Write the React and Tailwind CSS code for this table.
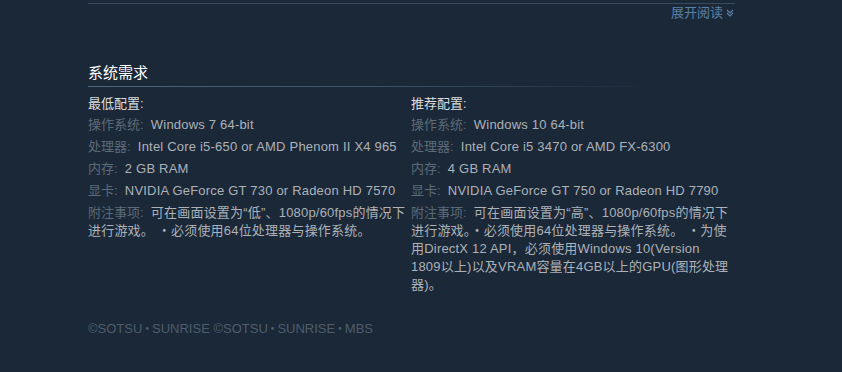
import React from "react";

const font = { fontFamily: '"Liberation Sans", "Noto Sans CJK SC", sans-serif' };

function Row({ label, children }) {
  return (
    <li className="mb-[4px] leading-[18px]">
      <span className="text-[#5c6a77]">{label}</span>
      <span className="text-[#acb2b8] tracking-[0.2px]">{children}</span>
    </li>
  );
}

function Col({ title, rows }) {
  return (
    <div className="w-[322px]">
      <div className="text-[#dcdedf] leading-[18px] mb-[3px]">{title}</div>
      <ul>
        {rows.map((r, i) => (
          <Row key={i} label={r[0]}>{r[1]}</Row>
        ))}
      </ul>
    </div>
  );
}

function Dot() {
  return <span className="mx-[-1.7px]">・</span>;
}

export default function App() {
  const left = [
    ["操作系统:  ", "Windows 7 64-bit"],
    ["处理器:  ", "Intel Core i5-650 or AMD Phenom II X4 965"],
    ["内存:  ", "2 GB RAM"],
    ["显卡:  ", "NVIDIA GeForce GT 730 or Radeon HD 7570"],
    ["附注事项:  ", "可在画面设置为“低”、1080p/60fps的情况下进行游戏。 ・必须使用64位处理器与操作系统。"],
  ];
  const right = [
    ["操作系统:  ", "Windows 10 64-bit"],
    ["处理器:  ", "Intel Core i5 3470 or AMD FX-6300"],
    ["内存:  ", "4 GB RAM"],
    ["显卡:  ", "NVIDIA GeForce GT 750 or Radeon HD 7790"],
    ["附注事项:  ", "可在画面设置为“高”、1080p/60fps的情况下进行游戏。・必须使用64位处理器与操作系统。 ・为使用DirectX 12 API，必须使用Windows 10(Version 1809以上)以及VRAM容量在4GB以上的GPU(图形处理器)。"],
  ];
  return (
    <div className="w-[842px] h-[372px] bg-[#1b2838] overflow-hidden text-[13px]" style={font}>
      <div className="ml-[88px] w-[647px] pt-[3px]">
        <div className="h-px bg-[#3a4b5c]" />
        <div className="flex justify-end items-center h-[18px] text-[#5a82a8]">
          <span>展开阅读</span>
          <svg width="10" height="10" viewBox="0 0 10 10" className="ml-[2px]" fill="none" stroke="#5a82a8" strokeWidth="1.2">
            <path d="M2 2 L5 5 L8 2" />
            <path d="M2 5 L5 8 L8 5" />
          </svg>
        </div>
        <div className="mt-[41px] w-[567px]">
          <div className="text-white text-[15px] leading-[20px]">系统需求</div>
          <div className="mt-[3px] h-px bg-gradient-to-r from-[#4d657d] via-[#3d5468] to-transparent" />
        </div>
        <div className="mt-[8px] flex gap-px whitespace-pre-wrap">
          <Col title="最低配置:" rows={left} />
          <Col title="推荐配置:" rows={right} />
        </div>
        <div className="mt-[21px] text-[#4f5d6a] text-[13px]">
          ©SOTSU<Dot />SUNRISE ©SOTSU<Dot />SUNRISE<Dot />MBS
        </div>
      </div>
    </div>
  );
}
